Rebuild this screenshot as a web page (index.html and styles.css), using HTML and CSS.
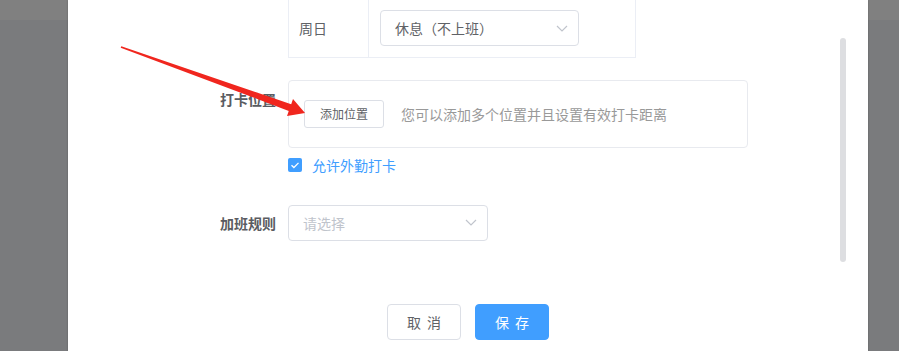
FILE: index.html
```html
<!DOCTYPE html>
<html lang="zh-CN">

<head>
	<meta charset="UTF-8" />
	<meta name="viewport" content="width=device-width, initial-scale=1.0" />
	<title>考勤规则</title>
	<link rel="stylesheet" href="styles.css">
</head>

<body>
	<div class="dialog">
		<div class="dialog-body">
			<!-- 工作日表格（已滚动） -->
			<div class="form-item">
				<div class="form-label"></div>
				<div class="form-content">
					<table class="week-table">
						<tr>
							<td class="day">周日</td>
							<td class="value">
								<div class="select">
									<span>休息（不上班）</span>
									<svg class="chevron" viewBox="0 0 12 7"><path d="M1 1l5 5 5-5" /></svg>
								</div>
							</td>
						</tr>
					</table>
				</div>
			</div>

			<!-- 打卡位置 -->
			<div class="form-item item-location">
				<div class="form-label">打卡位置</div>
				<div class="form-content">
					<div class="location-card">
						<button class="a-button small">添加位置</button>
						<span class="hint">您可以添加多个位置并且设置有效打卡距离</span>
					</div>
					<label class="checkbox">
						<span class="box">
							<svg viewBox="0 0 14 14"><path d="M3.5 7.2l2.4 2.3 4.6-4.6" /></svg>
						</span>
						允许外勤打卡
					</label>
				</div>
			</div>

			<!-- 加班规则 -->
			<div class="form-item item-overtime">
				<div class="form-label">加班规则</div>
				<div class="form-content">
					<div class="select placeholder">
						<span>请选择</span>
						<svg class="chevron" viewBox="0 0 12 7"><path d="M1 1l5 5 5-5" /></svg>
					</div>
				</div>
			</div>

			<div class="scroll-thumb"></div>
		</div>

		<div class="dialog-footer">
			<button class="a-button wide">取消</button>
			<button class="a-button wide primary">保存</button>
		</div>
	</div>

	<!-- 标注箭头 -->
	<svg class="mark-arrow" width="899" height="351" viewBox="0 0 899 351">
		<polygon points="121.3,46.2 291.2,104.3 293,99 305,113 287,116 288.8,110.9 120.7,47.8" />
	</svg>
</body>

</html>
```

FILE: styles.css
```css
* {
	box-sizing: border-box;
}

body {
	margin: 0;
	height: 351px;
	overflow: hidden;
	font-family: "Noto Sans CJK SC", "Liberation Sans", sans-serif;
	font-size: 14px;
	color: #606266;
	background: linear-gradient(#808080 0, #808080 20px, #7a7b7d 20px);
	position: relative;
}

.dialog {
	width: 800px;
	height: 351px;
	margin-left: 68px;
	background: #fff;
	position: relative;
	box-shadow: 0 0 2px rgba(0, 0, 0, 0.25);
	display: flex;
	flex-direction: column;
}

.dialog-body {
	flex: 1;
	position: relative;
}

.form-item {
	display: flex;
}

.form-label {
	width: 220px;
	padding-right: 12px;
	text-align: right;
	font-weight: bold;
	color: #5a5c61;
	flex-shrink: 0;
}

/* table */
.week-table {
	border-collapse: collapse;
	width: 348px;
}

.week-table td {
	height: 57px;
	border: 1px solid #ebeef5;
	border-top: none;
	padding: 0;
}

.week-table .day {
	width: 80px;
	padding-left: 10px;
	color: #606266;
}

.week-table .value {
	padding-left: 11px;
}

/* select */
.select {
	width: 199px;
	height: 36px;
	border: 1px solid #dcdfe6;
	border-radius: 4px;
	display: flex;
	align-items: center;
	justify-content: space-between;
	padding: 0 10px 0 14px;
	color: #606266;
}

.select.placeholder {
	color: #c0c4cc;
	width: 200px;
}

.chevron {
	width: 12px;
	height: 7px;
	fill: none;
	stroke: #c0c4cc;
	stroke-width: 1.2;
}

/* location */
.item-location {
	margin-top: 22px;
}

.item-location .form-label {
	line-height: 38px;
}

.location-card {
	width: 460px;
	border: 1px solid #e8eaef;
	border-radius: 4px;
	padding: 19px 15px;
	display: flex;
	align-items: center;
}

.hint {
	margin-left: 17px;
	color: #999;
}

.checkbox {
	display: flex;
	align-items: center;
	height: 20px;
	margin-top: 7px;
	color: #409eff;
	cursor: pointer;
}

.checkbox .box {
	width: 14px;
	height: 14px;
	border-radius: 2px;
	background: #409eff;
	margin-right: 10px;
	display: flex;
}

.checkbox svg {
	width: 14px;
	height: 14px;
	fill: none;
	stroke: #fff;
	stroke-width: 1.3;
}

/* overtime */
.item-overtime {
	margin-top: 30px;
}

.item-overtime .form-label {
	line-height: 36px;
}

/* scrollbar */
.scroll-thumb {
	position: absolute;
	right: 22px;
	top: 38px;
	width: 6px;
	height: 224px;
	border-radius: 3px;
	background: #dddee1;
}

/* footer */
.dialog-footer {
	height: 98px;
	display: flex;
	justify-content: center;
	gap: 14px;
	padding-top: 51px;
}

/* button */
.a-button {
	display: inline-flex;
	align-items: center;
	justify-content: center;
	line-height: 1;
	white-space: nowrap;
	cursor: pointer;
	background: #fff;
	border: 1px solid #dcdfe6;
	color: #606266;
	font-family: inherit;
	outline: none;
	margin: 0;
	border-radius: 4px;
}

.a-button.small {
	height: 28px;
	padding: 0 15px;
	font-size: 12px;
	border-radius: 3px;
}

.a-button.wide {
	width: 74px;
	height: 36px;
	font-size: 14px;
	letter-spacing: 6px;
	padding: 0 0 0 6px;
}

.a-button.primary {
	background: #409eff;
	border-color: #409eff;
	color: #fff;
}

.mark-arrow {
	position: absolute;
	left: 0;
	top: 0;
	pointer-events: none;
}

.mark-arrow polygon {
	fill: #f0261e;
}
```
